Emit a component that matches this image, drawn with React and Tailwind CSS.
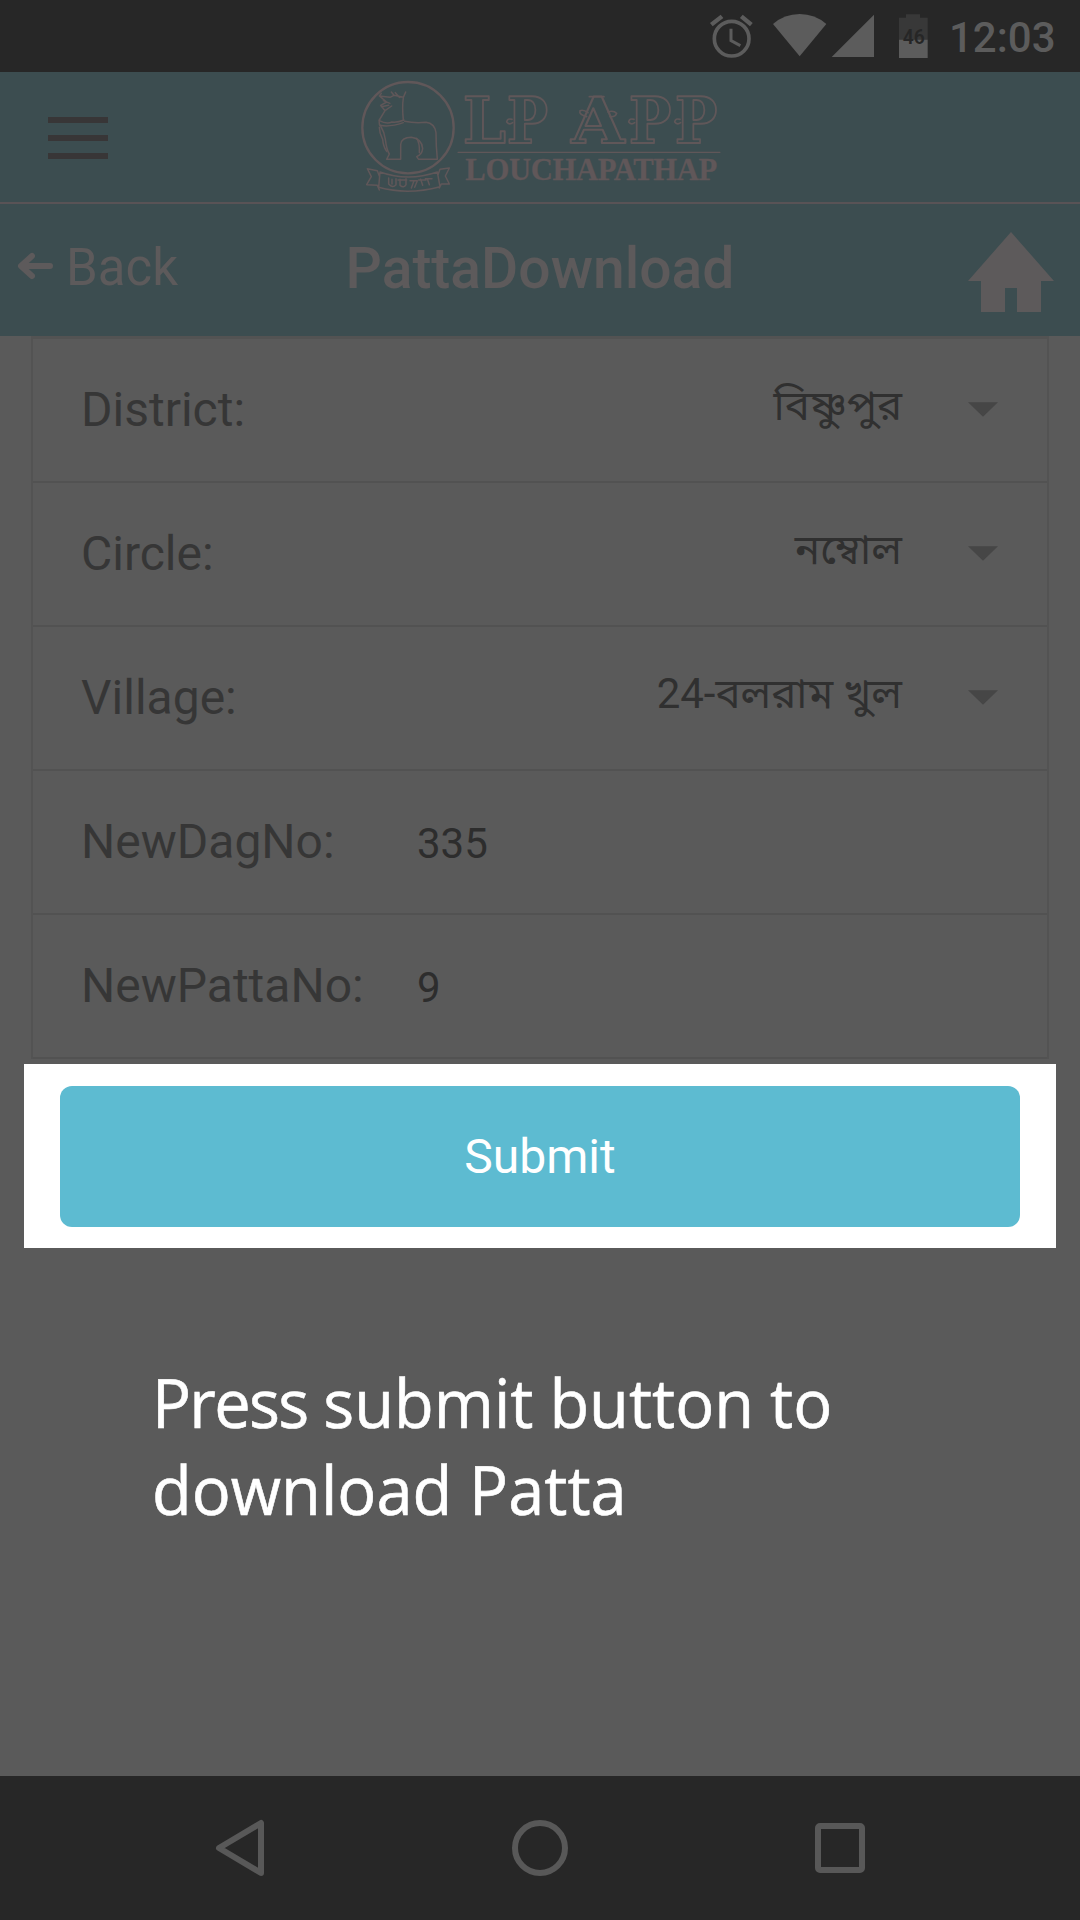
const rows = [
  { label: "District:", value: "বিষ্ণুপুর", select: true },
  { label: "Circle:", value: "নম্বোল", select: true },
  { label: "Village:", value: "24-বলরাম খুল", select: true },
  { label: "NewDagNo:", value: "335" },
  { label: "NewPattaNo:", value: "9" },
];

function StatusBar() {
  return (
    <div className="flex h-[72px] items-center bg-[#272727] text-[#5c5c5c]">
      <svg className="ml-[680px] h-[72px] w-[260px] shrink-0" viewBox="0 0 780 216">
        <g fill="none" stroke="#5c5c5c">
          <circle cx="155" cy="116" r="52" strokeWidth="11" />
          <path d="M153 86v36l28 15" strokeWidth="9" />
          <path d="M94 74l32-25M184 49l30 25" strokeWidth="13" />
        </g>
        <path d="M279 72Q313 42 359 42T439 72L359 169Z" fill="#5c5c5c" />
        <path d="M455 171L582 44V171Z" fill="#5c5c5c" />
        <path d="M657 53h21V43h42v10h23v66H657z" fill="#383838" />
        <path d="M657 119h86v55h-86z" fill="#5c5c5c" />
        <text x="668" y="132" fontFamily="Roboto" fontWeight="600" fontSize="63" textLength="66" lengthAdjust="spacingAndGlyphs" fill="#262626">46</text>
      </svg>
      <span className="ml-[9px] pt-[3px] text-[42px] leading-[69px] font-medium">12:03</span>
    </div>
  );
}

function Logo() {
  return (
    <svg className="h-[130px] w-[400px]" viewBox="0 6 1200 390" fill="none" stroke="#605759" strokeLinecap="round" strokeLinejoin="round">
      <circle cx="204" cy="173" r="137" strokeWidth="7" />
      <g strokeWidth="4.500">
        <path d="M118 150L135 122L122 106L140 96L118 78L150 82L162 76L190 82L197 66M118 78L124 70M162 76L154 66M178 82L166 68M135 122l20-14M130 92l20 8M124 110l22-4" />
        <path d="M190 84Q186 110 190 150M118 150Q116 165 122 168Q134 188 136 208Q140 240 148 252L140 268H182V224Q184 202 214 202Q246 206 248 236Q246 254 230 260L236 268H292Q288 230 288 188Q284 160 258 157Q222 160 194 154" />
        <path d="M118 152Q140 164 156 156Q172 158 192 150M120 166Q150 172 190 158M118 172Q118 190 128 208Q130 230 140 244M230 205Q240 220 238 248" />
        <path d="M120 306Q204 336 292 306L300 350Q204 376 116 352ZM118 318L112 302L82 296L94 320L80 344L112 346L118 360M294 314L300 298L328 294L316 318L328 342L304 342L298 354" />
        <path d="M146 324v18q12 14 22 2v-18M156 328v14M180 328v18q12 10 18-2v-18M174 330h26M210 332h22l-8 20M222 332l-8 22M242 328l6 18M236 330h22M262 326l6 18M256 326h20" />
      </g>
      <g fontFamily="DejaVu Serif" fontWeight="700" fontSize="192" strokeWidth="6">
        <text x="368" y="220" textLength="130" lengthAdjust="spacingAndGlyphs">L</text>
        <text x="500" y="220" textLength="124" lengthAdjust="spacingAndGlyphs">P</text>
        <text x="694" y="220" textLength="160" lengthAdjust="spacingAndGlyphs">A</text>
        <text x="866" y="220" textLength="128" lengthAdjust="spacingAndGlyphs">P</text>
        <text x="1004" y="220" textLength="128" lengthAdjust="spacingAndGlyphs">P</text>
      </g>
      <g strokeWidth="5">
        <path d="M516 148Q502 144 500 156Q508 166 518 158M882 148Q868 144 866 156Q874 166 884 158M1020 148Q1006 144 1004 156Q1012 166 1022 158" />
        <path d="M740 140Q716 134 720 122Q730 118 744 128M804 126Q820 120 830 130Q826 142 810 140M748 80H792" />
      </g>
      <text x="376" y="331" fontFamily="Liberation Serif" fontWeight="700" fontSize="92" textLength="756" lengthAdjust="spacing" fill="#605759" strokeWidth="1">LOUCHAPATHAP</text>
      <path d="M354 247H1140" strokeWidth="3.500" />
    </svg>
  );
}

function AppHeader() {
  return (
    <header className="flex h-[132px] justify-center border-b-2 border-[#595356] bg-[#3c4d50]">
      <div className="flex w-[340px] flex-col justify-center gap-3 pt-[1px] pl-12">
        <div className="h-1.5 w-[60px] bg-[#383637]" />
        <div className="h-1.5 w-[60px] bg-[#383637]" />
        <div className="h-1.5 w-[60px] bg-[#383637]" />
      </div>
      <Logo />
      <div className="w-[340px]" />
    </header>
  );
}

function TitleBar() {
  return (
    <div className="flex h-[132px] items-center bg-[#3c4d50] pb-[5px] text-[#5d5a5b]">
      <div className="flex w-[340px] items-center pl-[17px]">
        <svg className="-mt-[3px] h-[30px] w-[37px]" viewBox="0 0 37 30" fill="none" stroke="currentColor" strokeWidth="6" strokeLinecap="round" strokeLinejoin="round">
          <path d="M33 15H5M15 5L4 15L15 25" />
        </svg>
        <span className="ml-[12px] text-[51px] leading-[60px]">Back</span>
      </div>
      <h1 className="w-[400px] pt-[3px] text-center text-[57px] leading-[64px] font-medium">PattaDownload</h1>
      <svg className="mt-[9px] ml-[228px] h-[80px] w-[86px]" viewBox="0 0 86 80" fill="currentColor">
        <path d="M43 0L86 49H73V80H49V56H37V80H13V49H0Z" />
      </svg>
    </div>
  );
}

function FormRow({ label, value, select }) {
  return (
    <div className="flex h-36 items-center border-b-2 border-[#525252] pl-12">
      <span className="w-[336px] text-[48px] leading-[56px] text-[#363636]">{label}</span>
      {select ? (
        <>
          <span className="flex-1 pb-2 text-right text-[42px] leading-[56px] text-[#303030]">{value}</span>
          <svg className="mr-[49px] mb-[1px] ml-[66px] h-[15px] w-[30px]" viewBox="0 0 31 15">
            <path d="M0 0H31L15.500 15Z" fill="#464646" />
          </svg>
        </>
      ) : (
        <span className="pt-1 text-[42px] leading-[56px] text-[#2d2d2d]">{value}</span>
      )}
    </div>
  );
}

function NavBar() {
  return (
    <nav className="flex h-36 items-center justify-center bg-[#272727]">
      <svg className="h-[60px] w-[660px]" viewBox="0 0 660 60" fill="none" stroke="#585858" strokeWidth="6" strokeLinejoin="round">
        <path d="M51 5V55L9 30Z" />
        <circle cx="330" cy="30" r="25" />
        <rect x="608" y="8" width="44" height="44" rx="2" />
      </svg>
    </nav>
  );
}

export default function App() {
  return (
    <div className="flex h-[1920px] w-[1080px] flex-col overflow-hidden bg-[#5a5a5a] font-['Roboto','Noto_Sans_Bengali',sans-serif]">
      <StatusBar />
      <AppHeader />
      <TitleBar />
      <main className="flex flex-1 flex-col">
        <div className="ml-[31px] w-[1018px] border-x-2 border-t-3 border-[#535353]">
          {rows.map((row) => (
            <FormRow key={row.label} {...row} />
          ))}
        </div>
        <div className="mx-6 mt-[5px] h-[184px] bg-white px-9 py-[22px]">
          <button className="h-[141px] w-full rounded-xl bg-[#5dbbd1] text-[48px] text-white">Submit</button>
        </div>
        <div className="mt-[110px] ml-[152px] font-['Open_Sans',sans-serif] text-[68px] leading-[87px] whitespace-nowrap text-white [-webkit-text-stroke:0.6px_white]">
          <p className="w-max origin-left scale-x-[0.955] [word-spacing:-1px]">
            <span className="tracking-[-1.8px]">Press</span> submit button to
          </p>
          <p className="w-max origin-left scale-x-[0.955]">download Patta</p>
        </div>
      </main>
      <NavBar />
    </div>
  );
}
